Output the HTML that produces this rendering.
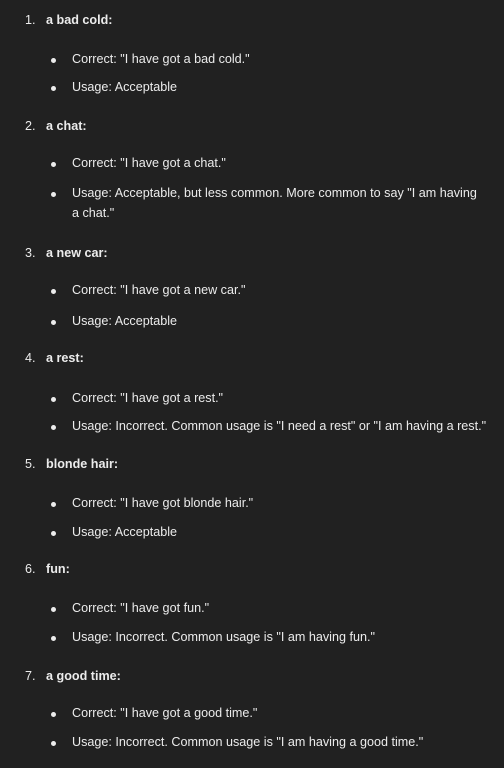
<!DOCTYPE html>
<html><head><meta charset="utf-8"><style>
html,body{margin:0;padding:0;background:#212121;width:504px;height:768px;overflow:hidden}
body{font-family:"Liberation Sans","DejaVu Sans",sans-serif;font-size:12.6px;color:#ececec;position:relative}
.r{position:absolute;line-height:20px;white-space:nowrap}
.h{font-weight:bold;left:46px}
.n{left:25px}
.b{left:72px}
.d{position:absolute;left:51px;width:5px;height:5px;border-radius:50%;background:#ececec}
</style></head><body>
<div class="r n" style="top:10px">1.</div><div class="r h" style="top:10px">a bad cold:</div>
<div class="d" style="top:58px"></div><div class="r b" style="top:49px">Correct: "I have got a bad cold."</div>
<div class="d" style="top:86px"></div><div class="r b" style="top:77px">Usage: Acceptable</div>

<div class="r n" style="top:116px">2.</div><div class="r h" style="top:116px">a chat:</div>
<div class="d" style="top:162px"></div><div class="r b" style="top:153px">Correct: "I have got a chat."</div>
<div class="d" style="top:192px"></div><div class="r b" style="top:183px;white-space:normal;width:415px">Usage: Acceptable, but less common. More common to say "I am having a chat."</div>

<div class="r n" style="top:243px">3.</div><div class="r h" style="top:243px">a new car:</div>
<div class="d" style="top:289px"></div><div class="r b" style="top:280px">Correct: "I have got a new car."</div>
<div class="d" style="top:320px"></div><div class="r b" style="top:311px">Usage: Acceptable</div>

<div class="r n" style="top:348px">4.</div><div class="r h" style="top:348px">a rest:</div>
<div class="d" style="top:397px"></div><div class="r b" style="top:388px">Correct: "I have got a rest."</div>
<div class="d" style="top:425px"></div><div class="r b" style="top:416px">Usage: Incorrect. Common usage is "I need a rest" or "I am having a rest."</div>

<div class="r n" style="top:454px">5.</div><div class="r h" style="top:454px">blonde hair:</div>
<div class="d" style="top:502px"></div><div class="r b" style="top:493px">Correct: "I have got blonde hair."</div>
<div class="d" style="top:531px"></div><div class="r b" style="top:522px">Usage: Acceptable</div>

<div class="r n" style="top:559px">6.</div><div class="r h" style="top:559px">fun:</div>
<div class="d" style="top:607px"></div><div class="r b" style="top:598px">Correct: "I have got fun."</div>
<div class="d" style="top:636px"></div><div class="r b" style="top:627px">Usage: Incorrect. Common usage is "I am having fun."</div>

<div class="r n" style="top:666px">7.</div><div class="r h" style="top:666px">a good time:</div>
<div class="d" style="top:712px"></div><div class="r b" style="top:703px">Correct: "I have got a good time."</div>
<div class="d" style="top:741px"></div><div class="r b" style="top:732px">Usage: Incorrect. Common usage is "I am having a good time."</div>
</body></html>
